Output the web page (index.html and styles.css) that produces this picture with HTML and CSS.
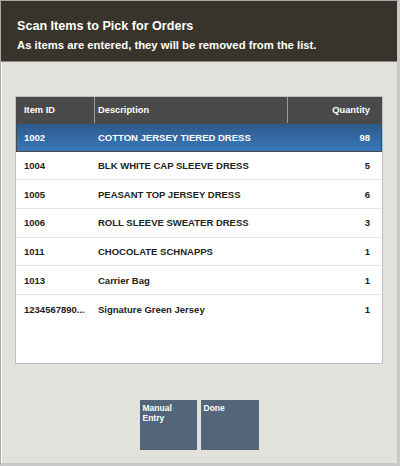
FILE: index.html
```html
<!DOCTYPE html>
<html lang="en">
<head>
  <meta charset="UTF-8" />
  <title>Scan Items to Pick for Orders</title>
  <link rel="stylesheet" href="styles.css">
</head>
<body>
  <div class="screen">
    <!-- Prompt header -->
    <div class="header">
      <div class="title">Scan Items to Pick for Orders</div>
      <div class="subtitle">As items are entered, they will be removed from the list.</div>
    </div>

    <div class="content">
      <div class="grid">
        <div class="grid-head">
          <div class="col-id">Item ID</div>
          <div class="col-desc">Description</div>
          <div class="col-qty">Quantity</div>
        </div>
        <div class="row selected">
          <div class="col-id">1002</div>
          <div class="col-desc">COTTON JERSEY TIERED DRESS</div>
          <div class="col-qty">98</div>
        </div>
        <div class="row">
          <div class="col-id">1004</div>
          <div class="col-desc">BLK WHITE CAP SLEEVE DRESS</div>
          <div class="col-qty">5</div>
        </div>
        <div class="row">
          <div class="col-id">1005</div>
          <div class="col-desc">PEASANT TOP JERSEY DRESS</div>
          <div class="col-qty">6</div>
        </div>
        <div class="row">
          <div class="col-id">1006</div>
          <div class="col-desc">ROLL SLEEVE SWEATER DRESS</div>
          <div class="col-qty">3</div>
        </div>
        <div class="row">
          <div class="col-id">1011</div>
          <div class="col-desc">CHOCOLATE SCHNAPPS</div>
          <div class="col-qty">1</div>
        </div>
        <div class="row">
          <div class="col-id">1013</div>
          <div class="col-desc">Carrier Bag</div>
          <div class="col-qty">1</div>
        </div>
        <div class="row last">
          <div class="col-id">1234567890...</div>
          <div class="col-desc">Signature Green Jersey</div>
          <div class="col-qty">1</div>
        </div>
      </div>

      <div class="buttons">
        <button class="btn">Manual<br>Entry</button>
        <button class="btn">Done</button>
      </div>
    </div>
  </div>
</body>
</html>
```

FILE: styles.css
```css
* {
  box-sizing: border-box;
}
body {
  margin: 0;
  padding: 0;
  font-family: "Liberation Sans", Arial, sans-serif;
  background: #fff;
}

.screen {
  width: 400px;
  height: 466px;
  border: 1px solid #a9a9a9;
  border-right: 3px solid #c9c9c9;
  border-bottom: 3px solid #c9c9c9;
  background: #e2e1dc;
  display: flex;
  flex-direction: column;
}

/* Header */
.header {
  background: #38342b;
  color: #fff;
  height: 61px;
  padding: 18px 0 0 16px;
  border-bottom: 1px solid #8a8880;
}
.title {
  font-size: 12.6px;
  font-weight: bold;
}
.subtitle {
  font-size: 11.3px;
  font-weight: bold;
  margin-top: 6px;
}

.content {
  flex: 1;
  border-left: 1px solid #fff;
  padding: 34px 14px 0 13px;
}

/* Grid */
.grid {
  background: #fff;
  border: 1px solid #b9c0c8;
  height: 268px;
}
.grid-head {
  display: flex;
  height: 26px;
  background: #4a4a4a;
  color: #fff;
  font-size: 9.3px;
  font-weight: bold;
  align-items: stretch;
}
.grid-head > div {
  display: flex;
  align-items: center;
}
.grid-head .col-id,
.grid-head .col-desc {
  border-right: 1px solid #9a9a9a;
}
.grid-head .col-qty {
  justify-content: flex-end;
}

.col-id {
  width: 79px;
  padding-left: 8px;
}
.col-desc {
  width: 193px;
  padding-left: 3px;
}
.col-qty {
  flex: 1;
  text-align: right;
  padding-right: 12px;
}

.row {
  display: flex;
  align-items: center;
  height: 28.7px;
  border-bottom: 1px solid #e6e6e6;
  font-size: 9.5px;
  font-weight: bold;
  color: #222;
}
.row.last {
  border-bottom: none;
}
.row.selected {
  background: linear-gradient(#2c5a8c, #3a78b9);
  color: #fff;
  border: 1px solid #4a4a4a;
}
.row.selected .col-id {
  padding-left: 7px;
}
.row.selected .col-desc {
  padding-left: 2px;
}
.row.selected .col-qty {
  padding-right: 11px;
}

/* Buttons */
.buttons {
  display: flex;
  justify-content: center;
  gap: 4px;
  margin-top: 36px;
}
.btn {
  width: 57px;
  height: 50px;
  background: #536579;
  color: #fff;
  border: none;
  border-radius: 0;
  font-family: "Liberation Sans", Arial, sans-serif;
  font-size: 8.5px;
  font-weight: bold;
  text-align: left;
  padding: 3px 3px;
  display: flex;
  align-items: flex-start;
  line-height: 10px;
}
.btn + .btn {
  width: 58px;
}
```
